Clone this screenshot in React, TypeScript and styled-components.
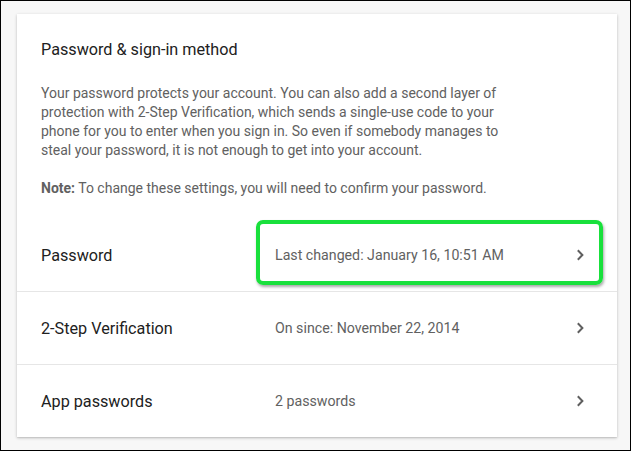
import React from "react";
import styled, { createGlobalStyle } from "styled-components";

const GlobalStyle = createGlobalStyle`
  html, body {
    margin: 0;
    padding: 0;
  }
  body {
    font-family: Roboto, "Liberation Sans", Arial, sans-serif;
    -webkit-font-smoothing: antialiased;
  }
`;

const Page = styled.div`
  box-sizing: border-box;
  width: 631px;
  height: 451px;
  border: 1px solid #000;
  background: #f7f7f7;
  padding: 13px 13px 13px 16px;
`;

const Card = styled.div`
  background: #fff;
  height: 100%;
  box-shadow: 0 1px 3px rgba(0, 0, 0, 0.22), 0 1px 1px rgba(0, 0, 0, 0.06);
  display: flex;
  flex-direction: column;
`;

const Intro = styled.div`
  padding: 26px 24px 0 24px;
`;

const Title = styled.h2`
  margin: 0 0 24px;
  font-size: 16.2px;
  line-height: 20px;
  font-weight: 400;
  color: #212121;
`;

const Text = styled.p`
  margin: 0 0 19px;
  max-width: 472px;
  font-size: 14px;
  line-height: 19px;
  color: #616161;

  strong {
    font-weight: 700;
  }
`;

const List = styled.div`
  margin-top: 2px;
  display: flex;
  flex-direction: column;
`;

const Row = styled.div<{ $last?: boolean }>`
  position: relative;
  height: 72px;
  display: flex;
  align-items: center;
  padding: 0 33px 0 24px;
  border-bottom: ${(p) => (p.$last ? "none" : "1px solid #e6e6e6")};
`;

const Label = styled.div`
  width: 234px;
  flex-shrink: 0;
  font-size: 16.2px;
  color: #212121;
`;

const Value = styled.div`
  flex: 1;
  font-size: 14.2px;
  color: #616161;
`;

const Highlight = styled.span`
  position: absolute;
  left: 239px;
  top: 1px;
  width: 347px;
  height: 65px;
  box-sizing: border-box;
  border: 4px solid #19e03c;
  border-radius: 7px;
  box-shadow: 1px 2px 3px rgba(0, 0, 0, 0.35);
  pointer-events: none;
`;

const Chevron = () => (
  <svg width="8" height="12" viewBox="0 0 8 12">
    <path d="M1.8 1.2 L6.4 6 L1.8 10.8" fill="none" stroke="#5f5f5f" strokeWidth="2" />
  </svg>
);

const rows = [
  { label: "Password", value: "Last changed: January 16, 10:51 AM", highlight: true },
  { label: "2-Step Verification", value: "On since: November 22, 2014" },
  { label: "App passwords", value: "2 passwords" },
];

export default function App() {
  return (
    <>
      <GlobalStyle />
      <Page>
        <Card>
          <Intro>
            <Title>Password &amp; sign-in method</Title>
            <Text>
              Your password protects your account. You can also add a second layer of
              protection with 2-Step Verification, which sends a single-use code to your
              phone for you to enter when you sign in. So even if somebody manages to
              steal your password, it is not enough to get into your account.
            </Text>
            <Text>
              <strong>Note:</strong> To change these settings, you will need to confirm your
              password.
            </Text>
          </Intro>
          <List>
            {rows.map((r, i) => (
              <Row key={r.label} $last={i === rows.length - 1}>
                <Label>{r.label}</Label>
                <Value>{r.value}</Value>
                <Chevron />
                {r.highlight && <Highlight />}
              </Row>
            ))}
          </List>
        </Card>
      </Page>
    </>
  );
}
